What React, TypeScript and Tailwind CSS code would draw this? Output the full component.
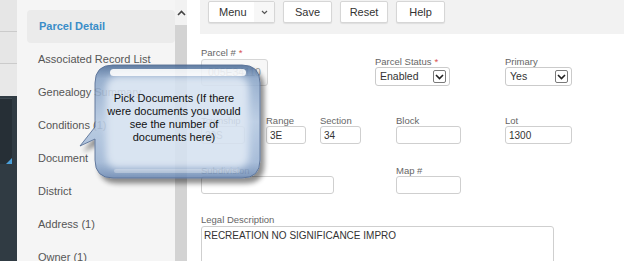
import React from 'react';

const navItems = [
  'Associated Record List',
  'Genealogy Summary',
  'Conditions (1)',
  'Document',
  'District',
  'Address (1)',
  'Owner (1)',
];

const Label: React.FC<{ text: string; req?: boolean }> = ({ text, req }) => (
  <div className="text-[9.5px] leading-[11px] text-[#666] whitespace-nowrap">
    {text}
    {req && <span className="text-[#d9534f] ml-[3px]">*</span>}
  </div>
);

const Input: React.FC<{ value?: string; className: string }> = ({ value, className }) => (
  <div
    className={`h-[18px] border border-[#cfcfcf] rounded-[3px] bg-white flex items-center pl-[3px] text-[10px] text-[#333] overflow-hidden whitespace-nowrap ${className}`}
  >
    {value}
  </div>
);

const Select: React.FC<{ value: string; className: string }> = ({ value, className }) => (
  <div
    className={`h-[19px] border border-[#cbcbcb] rounded-[3px] bg-white flex items-center justify-between pl-[4px] pr-[3px] text-[10.5px] text-[#333] ${className}`}
  >
    <span>{value}</span>
    <div className="w-[13px] h-[13px] border border-[#7a7a7a] rounded-[2px] bg-white flex items-center justify-center">
      <svg width="9" height="6" viewBox="0 0 9 6">
        <polyline points="1,1 4.5,4.5 8,1" fill="none" stroke="#222" strokeWidth="1.6" />
      </svg>
    </div>
  </div>
);

const Button: React.FC<{ children: React.ReactNode; className: string }> = ({ children, className }) => (
  <div
    className={`h-[22px] bg-white border border-[#d6d6d6] rounded-[2px] shadow-[0_1px_1px_rgba(0,0,0,0.08)] flex items-center text-[11px] text-[#333] ${className}`}
  >
    {children}
  </div>
);

const Callout: React.FC = () => (
  <div className="absolute left-[60px] top-[55px] w-[225px] h-[140px] pointer-events-none">
    <svg width="225" height="140" viewBox="0 0 225 140" className="absolute inset-0 opacity-[0.88]">
      <defs>
        <linearGradient id="outer" x1="0" y1="0" x2="0" y2="1">
          <stop offset="0" stopColor="#4c6c97" />
          <stop offset="0.12" stopColor="#8aa5c8" />
          <stop offset="0.5" stopColor="#b4c8e1" />
          <stop offset="0.86" stopColor="#9cb4d4" />
          <stop offset="1" stopColor="#6a88b2" />
        </linearGradient>
        <filter id="shadow" x="-20%" y="-20%" width="140%" height="140%">
          <feDropShadow dx="4" dy="5" stdDeviation="2.5" floodColor="#000" floodOpacity="0.5" />
        </filter>
        <filter id="soft">
          <feGaussianBlur stdDeviation="3.5" />
        </filter>
      </defs>
      <path
        d="M 53 10 H 182 Q 200 10 200 28 V 105 Q 200 123 182 123 H 53 Q 35 123 35 105 V 84 L 20 91 L 35 72 V 28 Q 35 10 53 10 Z"
        fill="url(#outer)"
        stroke="#45608a"
        strokeWidth="0.9"
        filter="url(#shadow)"
      />
      <rect x="46" y="21" width="143" height="92" rx="12" fill="#d6e2f1" filter="url(#soft)" />
      <rect x="50" y="14" width="136" height="7" rx="3.5" fill="#ffffff" opacity="0.9" />
      <rect x="54" y="114" width="126" height="4" rx="2" fill="#ffffff" opacity="0.3" />
    </svg>
    <div className="absolute left-[40px] top-[37px] w-[148px] text-center text-[11px] leading-[13px] text-[#111]">
      Pick Documents (If there
      <br />
      were documents you would
      <br />
      see the number of
      <br />
      documents here)
    </div>
  </div>
);

const App: React.FC = () => {
  return (
    <div className="relative w-[624px] h-[261px] flex overflow-hidden bg-white font-['Liberation_Sans',Arial,sans-serif]">
      {/* Left rail */}
      <div className="w-[17px] shrink-0 flex flex-col">
        <div className="h-[32px] shrink-0 bg-[#e6e6e6] border-b border-[#cbcbcb]" />
        <div className="h-[32px] shrink-0 bg-[#e6e6e6] border-b border-[#cbcbcb]" />
        <div className="h-[32px] shrink-0 bg-[#e8e8e8]" />
        <div className="flex-1 bg-[#303b43] pt-[2px]">
          <div className="w-[12px] h-[66px] bg-[#262f36] border-t border-[#3d4850] flex items-end justify-end">
            <svg width="6" height="6" viewBox="0 0 6 6">
              <polygon points="6,0 6,6 0,6" fill="#4ba0da" />
            </svg>
          </div>
        </div>
      </div>

      {/* Sidebar */}
      <div className="w-[158px] shrink-0 bg-[#f5f5f5] pt-[10px] pl-[10px]">
        <div className="h-[33px] rounded-[4px] bg-[#ebebeb] flex items-center pl-[12px] text-[11px] font-bold text-[#3a8dc8]">
          Parcel Detail
        </div>
        {navItems.map((t) => (
          <div key={t} className="h-[33px] flex items-center pl-[11px] text-[11px] text-[#555] whitespace-nowrap">
            {t}
          </div>
        ))}
      </div>

      {/* Scrollbar */}
      <div className="w-[12px] shrink-0 flex flex-col bg-[#f2f2f2]">
        <div className="h-[25px] shrink-0 flex items-center justify-center">
          <svg width="9" height="6" viewBox="0 0 9 6">
            <polyline points="1,5 4.5,1.5 8,5" fill="none" stroke="#444" strokeWidth="1.6" />
          </svg>
        </div>
        <div className="flex-1 bg-[#d3d3d3]" />
      </div>
      <div className="w-[13px] shrink-0 bg-white" />

      {/* Main */}
      <div className="flex-1 flex flex-col min-h-0">
        <div className="h-[34px] shrink-0 bg-[#f2f2f2] flex items-start gap-[8px] pl-[8px] pt-[1px]">
          <Button className="w-[67px] pl-[10px] pr-0 justify-between">
            <span>Menu</span>
            <div className="w-[20px] h-full flex items-center justify-center bg-[#f7f7f7]">
              <svg width="7" height="5" viewBox="0 0 7 5">
                <polyline points="1,1 3.5,3.5 6,1" fill="none" stroke="#555" strokeWidth="1.2" />
              </svg>
            </div>
          </Button>
          <Button className="w-[49px] justify-center">Save</Button>
          <Button className="w-[48px] justify-center">Reset</Button>
          <Button className="w-[49px] justify-center">Help</Button>
        </div>

        <div className="pl-[1px] shrink-0">
          {/* Row 1 */}
          <div className="mt-[13px] flex items-end">
            <div className="w-[174px]">
              <Label text="Parcel #" req />
              <div className="mt-[1px] w-[67px] h-[27px] border border-[#d6d6d6] rounded-[3px] bg-[#f7f7f7] flex items-center pl-[6px] text-[10.5px] text-[#9a9a9a] overflow-hidden whitespace-nowrap">
                005E34110
              </div>
            </div>
            <div className="w-[130px]">
              <Label text="Parcel Status" req />
              <Select value="Enabled" className="w-[75px]" />
            </div>
            <div>
              <Label text="Primary" />
              <Select value="Yes" className="w-[67px]" />
            </div>
          </div>

          {/* Row 2 */}
          <div className="mt-[29px] flex">
            <div className="w-[65px]">
              <Label text="Township" />
              <Input value="20S" className="w-[44px] text-[#777]" />
            </div>
            <div className="w-[54px]">
              <Label text="Range" />
              <Input value="3E" className="w-[40px]" />
            </div>
            <div className="w-[76px]">
              <Label text="Section" />
              <Input value="34" className="w-[41px]" />
            </div>
            <div className="w-[109px]">
              <Label text="Block" />
              <Input className="w-[65px]" />
            </div>
            <div>
              <Label text="Lot" />
              <Input value="1300" className="w-[67px]" />
            </div>
          </div>

          {/* Row 3 */}
          <div className="mt-[21px] flex">
            <div className="w-[195px]">
              <Label text="Subdivision" />
              <Input className="w-[133px]" />
            </div>
            <div>
              <Label text="Map #" />
              <Input className="w-[65px]" />
            </div>
          </div>

          {/* Row 4 */}
          <div className="mt-[20px]">
            <Label text="Legal Description" />
            <div className="mt-[1px] w-[353px] h-[60px] border border-[#cfcfcf] rounded-[3px] bg-white px-[2px] pt-[3px] text-[10px] text-[#333] leading-[12px]">
              RECREATION NO SIGNIFICANCE IMPRO
            </div>
          </div>
        </div>
      </div>

      <Callout />
    </div>
  );
};

export default App;
